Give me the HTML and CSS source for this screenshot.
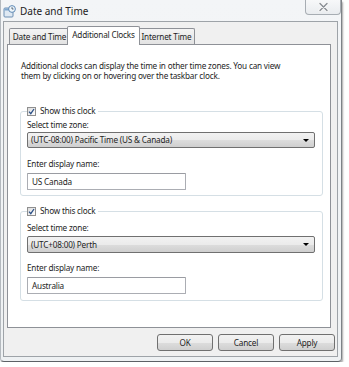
FILE: index.html
```html
<!DOCTYPE html>
<html>
<head>
<meta charset="utf-8">
<link rel="stylesheet" href="styles.css">
</head>
<body>
<div class="window">
  <div class="titlebar">
    <svg class="app-icon" width="13" height="13" viewBox="0 0 13 13">
      <rect x="1" y="3" width="9" height="9" rx="1" fill="#dfe9f3" stroke="#6d8fb3" stroke-width="1"/>
      <rect x="1.5" y="3.5" width="8" height="2" fill="#7fa7cf"/>
      <circle cx="9" cy="4" r="3.4" fill="#eef6fb" stroke="#5f89b5" stroke-width="1"/>
      <path d="M9 2.2V4h1.5" stroke="#345" stroke-width="0.8" fill="none"/>
    </svg>
    <span class="title">Date and Time</span>
    <div class="close">
      <svg width="11" height="10" viewBox="0 0 11 10">
        <path d="M2 1.5L9 8.5M9 1.5L2 8.5" stroke="#f8f8f8" stroke-width="3.2" stroke-linecap="round"/>
        <path d="M2 1.5L9 8.5M9 1.5L2 8.5" stroke="#8a8f95" stroke-width="1.4" stroke-linecap="round"/>
      </svg>
    </div>
  </div>
  <div class="client">
    <div class="tabs">
      <div class="tab">Date and Time</div>
      <div class="tab active">Additional Clocks</div>
      <div class="tab">Internet Time</div>
    </div>
    <div class="panel">
      <p class="desc">Additional clocks can display the time in other time zones. You can view<br>them by clicking on or hovering over the taskbar clock.</p>
      <fieldset class="group">
        <legend><span class="check"><svg width="7" height="7" viewBox="0 0 7 7"><path d="M1 3.6L2.8 5.6L6 1" stroke="#2a4f86" stroke-width="1.3" fill="none"/></svg></span>Show this clock</legend>
        <div class="label">Select time zone:</div>
        <div class="select"><span>(UTC-08:00) Pacific Time (US &amp; Canada)</span><span class="arrow"></span></div>
        <div class="label second">Enter display name:</div>
        <div class="input">US Canada</div>
      </fieldset>
      <fieldset class="group g2">
        <legend><span class="check"><svg width="7" height="7" viewBox="0 0 7 7"><path d="M1 3.6L2.8 5.6L6 1" stroke="#2a4f86" stroke-width="1.3" fill="none"/></svg></span>Show this clock</legend>
        <div class="label">Select time zone:</div>
        <div class="select"><span>(UTC+08:00) Perth</span><span class="arrow"></span></div>
        <div class="label second">Enter display name:</div>
        <div class="input">Australia</div>
      </fieldset>
    </div>
    <div class="buttons">
      <div class="btn">OK</div>
      <div class="btn">Cancel</div>
      <div class="btn">Apply</div>
    </div>
  </div>
</div>
</body>
</html>
```

FILE: styles.css
```css
* { box-sizing: border-box; }
html, body { margin: 0; padding: 0; background: #ffffff; }
body {
  font-family: "Noto Sans", "Open Sans", sans-serif;
  font-size: 8.2px;
  letter-spacing: -0.2px;
  color: #1e1e1e;
}
.window {
  width: 342px;
  height: 362px;
  background: linear-gradient(180deg, #f3f5f7 0%, #eef1f3 100%);
  border: 1px solid #b4b9be;
  border-top: none;
  border-right-color: #7d8287;
  border-bottom-color: #5d6166;
  display: flex;
  flex-direction: column;
  border-radius: 0 0 4px 4px;
  box-shadow: 1px 2px 2px rgba(0,0,0,0.35);
}
.titlebar {
  height: 21px;
  display: flex;
  align-items: flex-start;
  padding-left: 2px;
}
.app-icon { margin-top: 5px; }
.title {
  margin-left: 4px;
  margin-top: 5px;
  font-size: 10px;
  letter-spacing: 0;
  line-height: 13px;
  color: #222;
}
.close {
  margin-left: auto;
  margin-right: 0;
  width: 36px;
  height: 15px;
  border: 1px solid #a7adb3;
  border-top: none;
  border-radius: 0 0 4px 4px;
  background: linear-gradient(180deg, #f7f8f9, #e9ecef);
  display: flex;
  align-items: center;
  justify-content: center;
}
.client {
  margin-left: 2px;
  width: 335px;
  height: 336px;
  border: 1px solid #9ea3a8;
  background: #f0f0f0;
  padding: 4px 0 0 3px;
  display: flex;
  flex-direction: column;
}
.tabs {
  display: flex;
  align-items: flex-end;
  margin-left: 2px;
  height: 18px;
  position: relative;
  z-index: 1;
}
.tab {
  height: 16px;
  border: 1px solid #8e9197;
  border-bottom: none;
  border-radius: 2px 2px 0 0;
  background: linear-gradient(180deg, #f4f4f4, #e3e3e3);
  line-height: 15px;
  padding: 0;
  white-space: nowrap;
  text-align: center;
  margin-right: -1px;
}
.tab:first-child { width: 61px; }
.tab.active {
  width: 73px;
  height: 19px;
  margin-left: -2px;
  margin-right: -2px;
  background: #ffffff;
  line-height: 16px;
  margin-bottom: -1px;
  position: relative;
  z-index: 2;
}
.tab:last-child { width: 57px; }
.panel {
  width: 324px;
  height: 284px;
  background: #ffffff;
  border: 1px solid #8e9197;
  padding: 0 0 0 12px;
}
.desc {
  margin: 16px 0 0 1px;
  line-height: 10px;
}
.group {
  margin: 24px 0 0 0;
  width: 303px;
  min-width: 0;
  border: 1px solid #d5dfe5;
  border-radius: 3px;
  padding: 0 7px 5px 6px;
}
.g2 { margin-top: 9px; padding-bottom: 6px; }
legend {
  padding: 0 3px 0 0;
  height: 12px;
  line-height: 12px;
  display: flex;
  align-items: center;
}
.check {
  width: 9px;
  height: 9px;
  border: 1px solid #8f8f8f;
  background: linear-gradient(135deg, #dcdcdc, #ffffff);
  margin-right: 4px;
  display: inline-flex;
  align-items: center;
  justify-content: center;
}
.label {
  margin-top: 3px;
  line-height: 10px;
}
.g2 .label { margin-top: 6px; }
.label.second { margin-top: 11px; }
.g2 .label.second { margin-top: 10px; }
.select {
  margin-top: 2px;
  height: 16px;
  border: 1px solid #707070;
  border-radius: 2px;
  background: linear-gradient(180deg, #f2f2f2 0%, #ebebeb 50%, #dddddd 51%, #cfcfcf 100%);
  display: flex;
  align-items: center;
  padding: 0 5px 0 3px;
  line-height: 14px;
}
.g2 .select { height: 17px; margin-top: 3px; }
.arrow {
  margin-left: auto;
  width: 0;
  height: 0;
  border-left: 3px solid transparent;
  border-right: 3px solid transparent;
  border-top: 3px solid #000;
}
.input {
  margin-top: 4px;
  width: 159px;
  height: 17px;
  border: 1px solid #abadb3;
  border-top-color: #9a9ca2;
  border-radius: 1px;
  background: #fff;
  padding: 0 4px;
  line-height: 15px;
}
.buttons {
  display: flex;
  justify-content: flex-end;
  gap: 5px;
  margin-top: 6px;
  margin-right: 2px;
}
.btn {
  width: 56px;
  height: 17px;
  border: 1px solid #707070;
  border-radius: 3px;
  background: linear-gradient(180deg, #f2f2f2 0%, #ebebeb 50%, #dddddd 51%, #cfcfcf 100%);
  text-align: center;
  line-height: 15px;
}
```
